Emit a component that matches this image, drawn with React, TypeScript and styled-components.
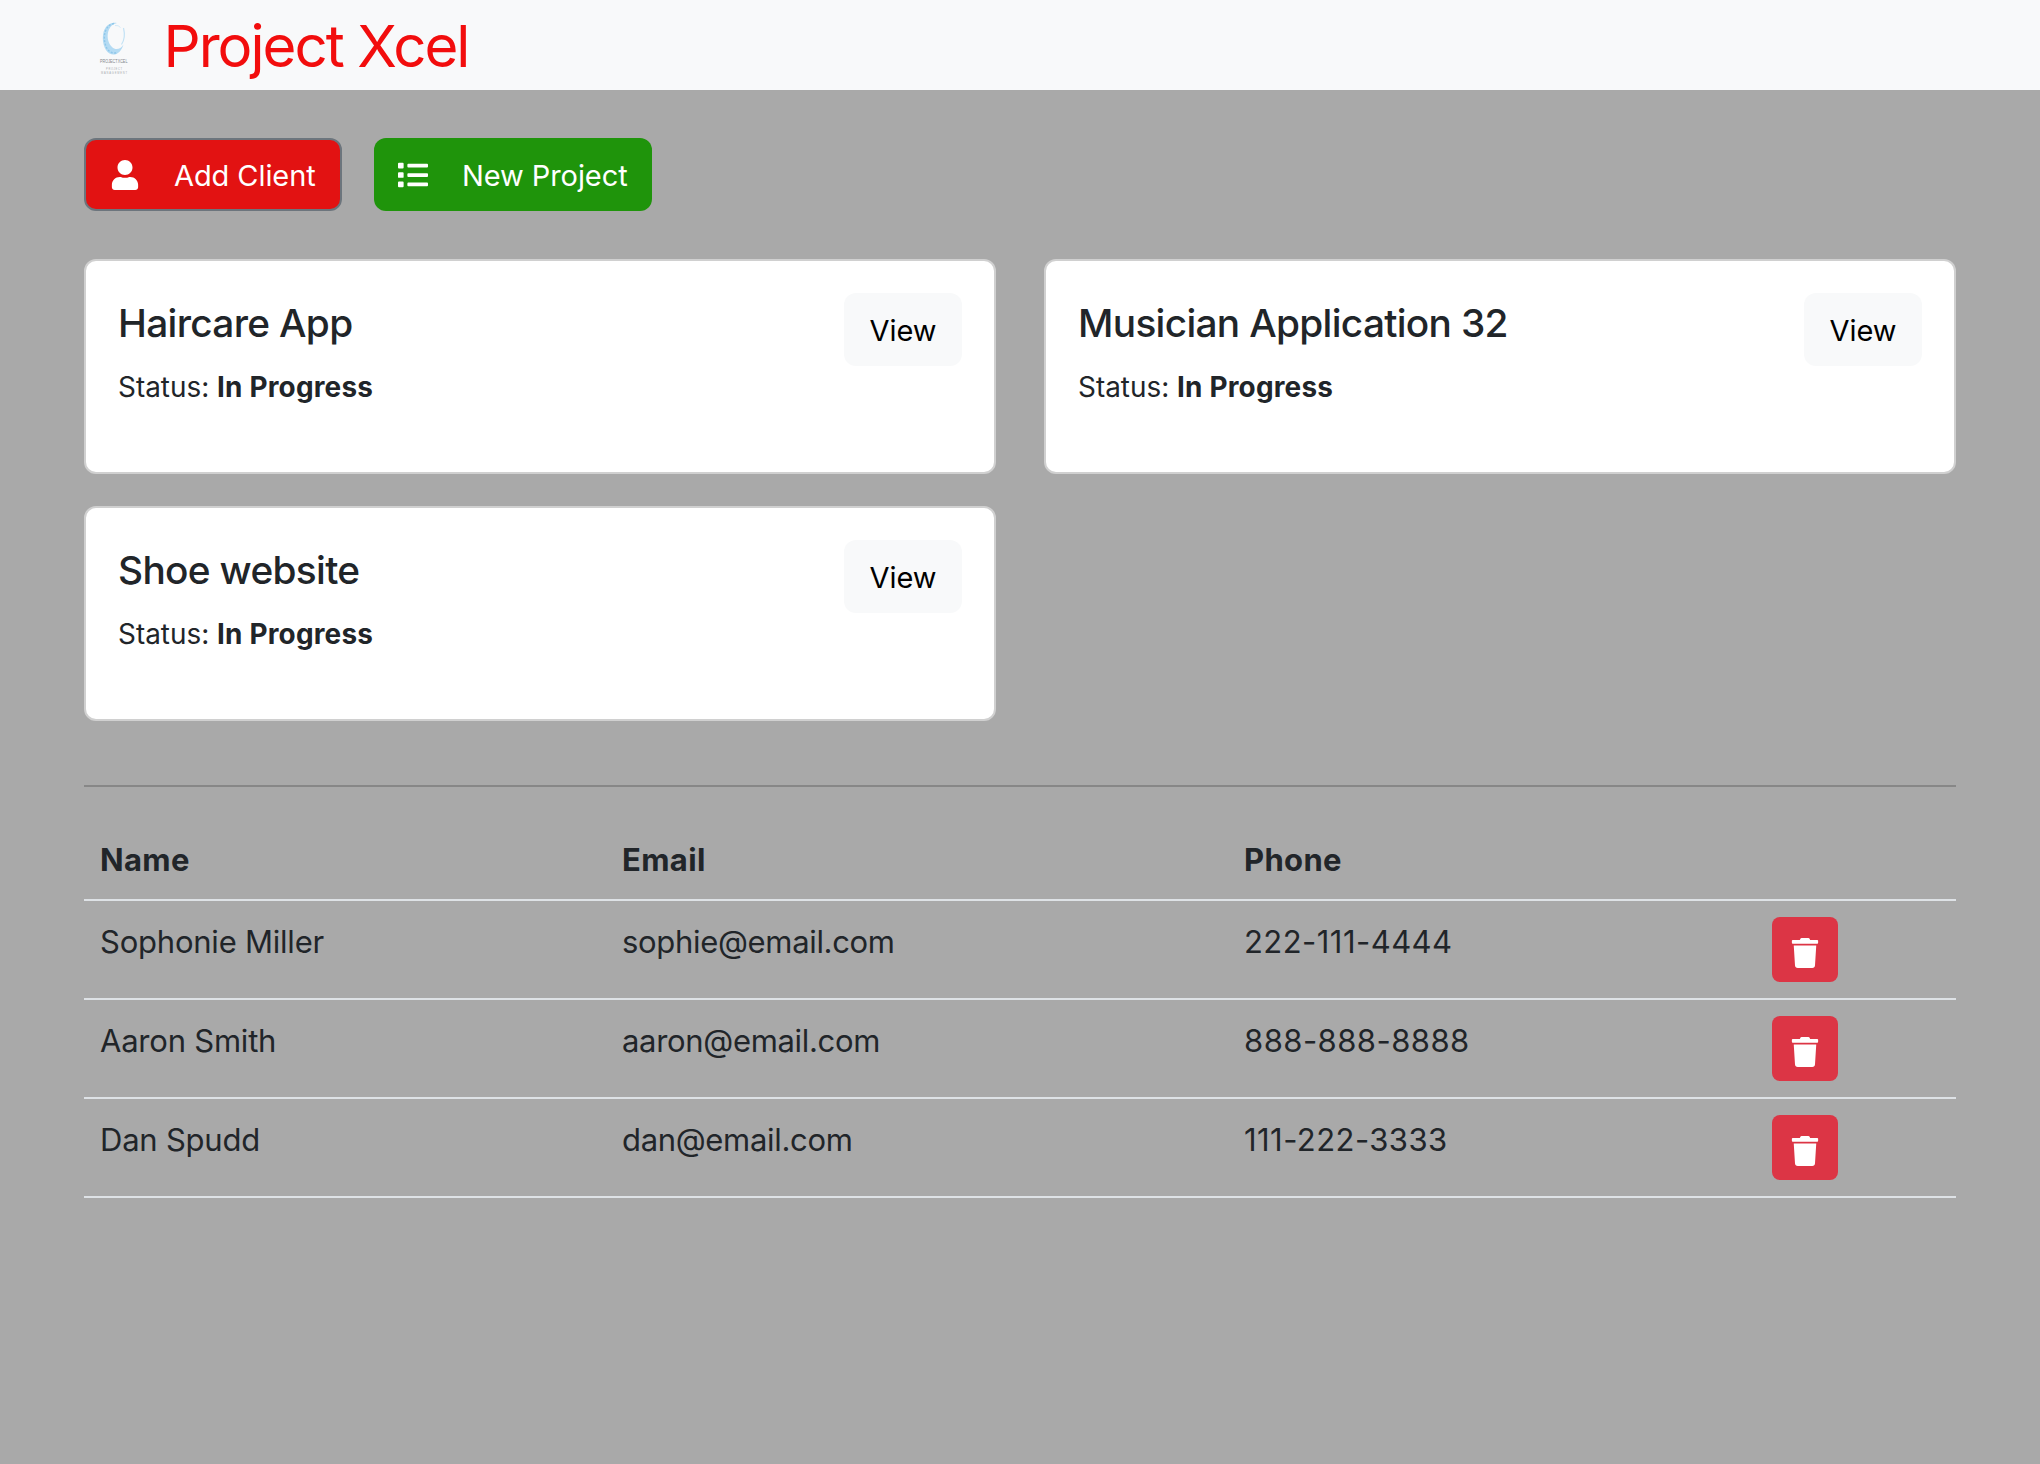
import React from "react";
import styled, { createGlobalStyle } from "styled-components";
import { FaUser, FaList, FaTrash } from "react-icons/fa";

const GlobalStyle = createGlobalStyle`
  * { box-sizing: border-box; }
  body {
    margin: 0;
    background: #a9a9a9;
    color: #212529;
    font-family: Inter, "Liberation Sans", sans-serif;
    font-size: 31px;
    line-height: 48px;
    -webkit-font-smoothing: antialiased;
  }
`;

const Navbar = styled.nav`
  display: flex;
  align-items: center;
  height: 90px;
  padding: 0 84px;
  background: #f8f9fa;
`;

const LogoImage = styled.svg`
  display: block;
  width: 60px;
  height: 60px;
  overflow: visible;
`;

const Brand = styled.div`
  margin-left: 19.5px;
  padding-top: 2px;
  color: #f20d0d;
  font-size: 58.2px;
  line-height: 88px;
  letter-spacing: -2px;
`;

const Page = styled.main`
  padding: 48px 84px 0;
`;

const Actions = styled.div`
  display: flex;
  gap: 32px;
  margin-bottom: 48px;
`;

const ActionButton = styled.button<{ $bg: string; $border?: string; $width: number }>`
  display: flex;
  align-items: center;
  gap: 34px;
  width: ${(p) => p.$width}px;
  height: 73px;
  padding: 0 24px;
  border: ${(p) => (p.$border ? `2px solid ${p.$border}` : "0")};
  border-radius: 12px;
  background: ${(p) => p.$bg};
  color: #fff;
  font: inherit;
  font-size: 29px;
  letter-spacing: -0.08px;
  white-space: nowrap;

  svg {
    flex: none;
    width: 30px;
    height: 30px;
  }
`;

const ButtonLabel = styled.span`
  padding-top: 2px;
`;

const Cards = styled.section`
  display: grid;
  grid-template-columns: 1fr 1fr;
  gap: 32px 48px;
`;

const Card = styled.article`
  display: flex;
  justify-content: space-between;
  align-items: flex-start;
  height: 215px;
  padding: 32px;
  border: 2px solid #d0d0d0;
  border-radius: 12px;
  background: #fff;
`;

const CardTitle = styled.h5`
  margin: 6px 0 19px;
  font-size: 38.8px;
  font-weight: 500;
  line-height: 48px;
  letter-spacing: -0.68px;
`;

const Status = styled.p`
  margin: 0;
  font-size: 27.9px;
  line-height: 42px;

  strong {
    letter-spacing: 0.2px;
  }
`;

const ViewButton = styled.button`
  width: 118px;
  height: 73px;
  padding: 2px 0 0;
  border: 0;
  border-radius: 12px;
  background: #f8f9fa;
  color: #000;
  font: inherit;
  font-size: 29px;
`;

const Divider = styled.hr`
  height: 2px;
  margin: 64px 0 48px;
  border: 0;
  background: #878787;
`;

const Table = styled.table`
  width: 100%;
  table-layout: fixed;
  border-collapse: separate;
  border-spacing: 0;
`;

const HeadCell = styled.th`
  height: 66px;
  padding: 1px 16px 15px;
  border-bottom: 2px solid #dee2e6;
  text-align: left;
  font-weight: 700;
  letter-spacing: 0.35px;
`;

const Cell = styled.td<{ $spacing?: number }>`
  height: 99px;
  padding: 17px 16px 15px;
  border-bottom: 2px solid #dee2e6;
  vertical-align: top;
  letter-spacing: ${(p) => p.$spacing ?? 0}px;
`;

const ActionCell = styled(Cell)`
  padding: 16px;
`;

const DeleteButton = styled.button`
  display: flex;
  align-items: center;
  justify-content: center;
  width: 66px;
  height: 65px;
  padding: 7px 0 0;
  border: 0;
  border-radius: 8px;
  background: #dc3545;
  color: #fff;
  font-size: 30px;
`;

const LogoText = styled.text`
  font-family: "Liberation Sans", sans-serif;
  line-height: 1;
`;

function Logo() {
  return (
    <LogoImage viewBox="0 0 60 60" aria-label="ProjectXcel">
      <path
        d="M33 8C27 6.500 21.500 10 19.500 17C17.500 26 20 35 25.500 38.500C31 41.500 37 38 39.500 29.500C36.500 34.500 31.500 35.500 28 32C23.500 27.500 22.500 20 25 14.500C26.500 11 29 9 33 8Z"
        fill="#b4dbf3"
      />
      <path
        d="M30 8.500C21.500 10 19 20 21 28C22.500 35 27 39.500 33 37.500"
        fill="none"
        stroke="#8fc7ea"
        strokeWidth="1.400"
        strokeDasharray="2 1.500"
      />
      <path
        d="M39.500 13C41 19 40.500 25 37.500 29.500"
        fill="none"
        stroke="#c3e2f5"
        strokeWidth="1.200"
      />
      <path d="M31 10.500Q34.500 10 36.500 12.500" fill="none" stroke="#d3eaf8" strokeWidth="1" />
      <LogoText x="16" y="48" fontSize="6" fill="#85888c" textLength="27.500" lengthAdjust="spacingAndGlyphs">
        PROJECTXCEL
      </LogoText>
      <LogoText x="22" y="54.500" fontSize="2.600" fill="#a8abaf" textLength="16" lengthAdjust="spacing">
        PROJECT
      </LogoText>
      <LogoText x="17" y="58.500" fontSize="2.600" fill="#a8abaf" textLength="26" lengthAdjust="spacing">
        MANAGEMENT
      </LogoText>
    </LogoImage>
  );
}

const projects = ["Haircare App", "Musician Application 32", "Shoe website"];

const clients = [
  { name: "Sophonie Miller", email: "sophie@email.com", phone: "222-111-4444" },
  { name: "Aaron Smith", email: "aaron@email.com", phone: "888-888-8888" },
  { name: "Dan Spudd", email: "dan@email.com", phone: "111-222-3333" },
];

export default function App() {
  return (
    <>
      <GlobalStyle />
      <Navbar>
        <Logo />
        <Brand>Project Xcel</Brand>
      </Navbar>
      <Page>
        <Actions>
          <ActionButton $bg="#e21212" $border="#6c757d" $width={258}>
            <FaUser />
            <ButtonLabel>Add Client</ButtonLabel>
          </ActionButton>
          <ActionButton $bg="#1f940b" $width={278}>
            <FaList />
            <ButtonLabel>New Project</ButtonLabel>
          </ActionButton>
        </Actions>
        <Cards>
          {projects.map((name) => (
            <Card key={name}>
              <div>
                <CardTitle>{name}</CardTitle>
                <Status>
                  Status: <strong>In Progress</strong>
                </Status>
              </div>
              <ViewButton>View</ViewButton>
            </Card>
          ))}
        </Cards>
        <Divider />
        <Table>
          <colgroup>
            <col width={522} />
            <col width={622} />
            <col width={528} />
            <col />
          </colgroup>
          <thead>
            <tr>
              <HeadCell>Name</HeadCell>
              <HeadCell>Email</HeadCell>
              <HeadCell>Phone</HeadCell>
              <HeadCell />
            </tr>
          </thead>
          <tbody>
            {clients.map((client) => (
              <tr key={client.email}>
                <Cell $spacing={-0.22}>{client.name}</Cell>
                <Cell $spacing={-0.32}>{client.email}</Cell>
                <Cell $spacing={0.45}>{client.phone}</Cell>
                <ActionCell>
                  <DeleteButton>
                    <FaTrash />
                  </DeleteButton>
                </ActionCell>
              </tr>
            ))}
          </tbody>
        </Table>
      </Page>
    </>
  );
}
